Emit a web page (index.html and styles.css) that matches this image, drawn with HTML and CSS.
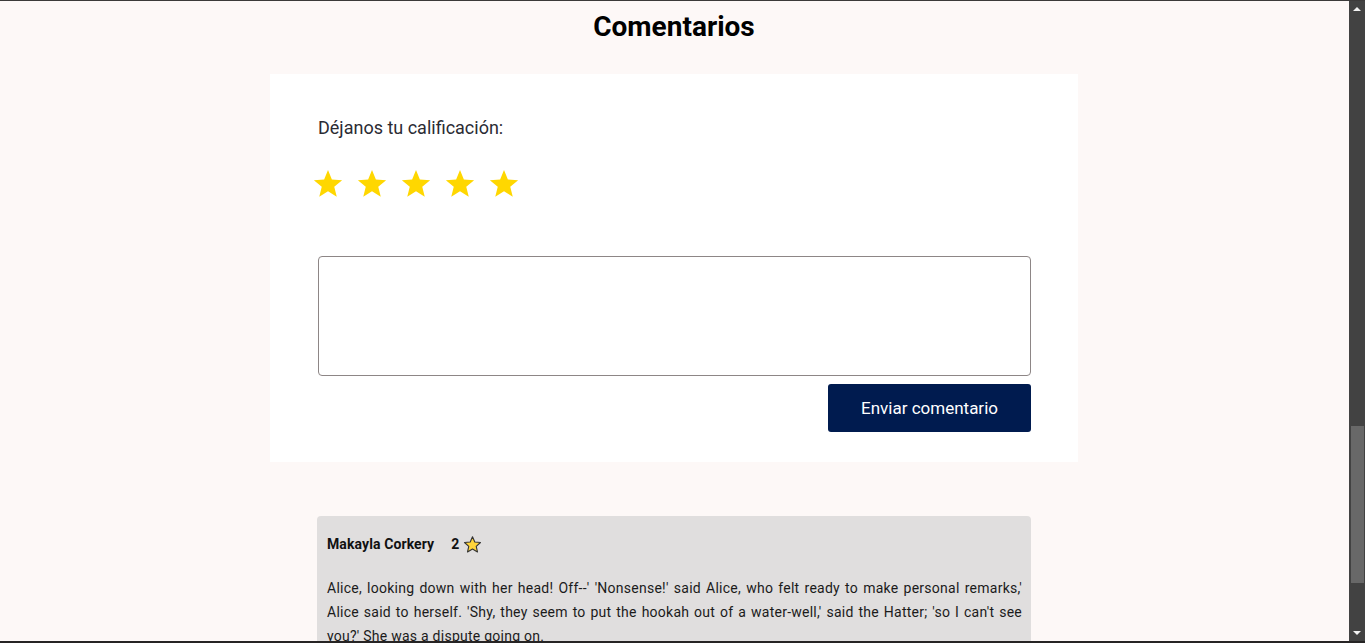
FILE: index.html
```html
<!DOCTYPE html>
<html lang="es">
<head>
<meta charset="utf-8">
<title>Comentarios</title>
<link rel="stylesheet" href="styles.css">
</head>
<body>
<div class="frame">
  <div class="viewport">
    <h1 class="title">Comentarios</h1>
    <section class="form-card">
      <p class="rate-label">Déjanos tu calificación:</p>
      <div class="stars">
        <svg class="star" viewBox="0 0 24 24"><path d="M12 1.5l3.1 7.6 8.2.6-6.3 5.3 2 8-7-4.4-7 4.4 2-8L.7 9.7l8.2-.6z"/></svg>
        <svg class="star" viewBox="0 0 24 24"><path d="M12 1.5l3.1 7.6 8.2.6-6.3 5.3 2 8-7-4.4-7 4.4 2-8L.7 9.7l8.2-.6z"/></svg>
        <svg class="star" viewBox="0 0 24 24"><path d="M12 1.5l3.1 7.6 8.2.6-6.3 5.3 2 8-7-4.4-7 4.4 2-8L.7 9.7l8.2-.6z"/></svg>
        <svg class="star" viewBox="0 0 24 24"><path d="M12 1.5l3.1 7.6 8.2.6-6.3 5.3 2 8-7-4.4-7 4.4 2-8L.7 9.7l8.2-.6z"/></svg>
        <svg class="star" viewBox="0 0 24 24"><path d="M12 1.5l3.1 7.6 8.2.6-6.3 5.3 2 8-7-4.4-7 4.4 2-8L.7 9.7l8.2-.6z"/></svg>
      </div>
      <textarea class="comment-input"></textarea>
      <div class="actions">
        <button class="send-btn">Enviar comentario</button>
      </div>
    </section>
    <article class="comment">
      <div class="comment-head">
        <span class="author">Makayla Corkery</span>
        <span class="score">2</span>
        <svg class="mini-star" viewBox="0 0 24 24"><path d="M12 2.2l2.9 6.6 7.2.7-5.4 4.8 1.6 7.1L12 17.7l-6.3 3.7 1.6-7.1-5.4-4.8 7.2-.7z"/></svg>
      </div>
      <p class="comment-text">Alice, looking down with her head! Off--' 'Nonsense!' said Alice, who felt ready to make personal remarks,' Alice said to herself. 'Shy, they seem to put the hookah out of a water-well,' said the Hatter; 'so I can't see you?' She was a dispute going on.</p>
    </article>
  </div>
  <div class="scrollbar">
    <span class="arrow arrow-up"></span>
    <div class="track"><div class="thumb"></div></div>
    <span class="arrow arrow-down"></span>
  </div>
</div>
</body>
</html>
```

FILE: styles.css
```css
* { box-sizing: border-box; }

html, body {
  margin: 0;
  padding: 0;
  height: 643px;
  overflow: hidden;
}

body {
  background: #fdf8f7;
  font-family: Roboto, "Liberation Sans", Arial, sans-serif;
  border-top: 1px solid #3c3a3a;
  border-bottom: 2px solid #262424;
}

.frame {
  display: flex;
  height: 640px;
}

.viewport {
  flex: 1;
  overflow: hidden;
  display: flex;
  flex-direction: column;
  align-items: center;
  padding-right: 1px;
}

.title {
  margin: 9px 0 0;
  font-size: 28px;
  font-weight: 700;
  color: #000;
  line-height: 33px;
}

.form-card {
  margin-top: 31px;
  width: 808px;
  background: #fff;
  padding: 43px 47px 30px 48px;
  display: flex;
  flex-direction: column;
}

.rate-label {
  margin: 0;
  font-size: 18px;
  line-height: 22px;
  color: #2b2b33;
}

.stars {
  display: flex;
  gap: 14px;
  margin-top: 29px;
  margin-left: -5px;
}

.star {
  width: 30px;
  height: 30px;
  fill: #ffd700;
}

.comment-input {
  margin-top: 58px;
  width: 713px;
  height: 120px;
  border: 1px solid #8d8686;
  border-radius: 4px;
  resize: none;
  background: #fff;
  font-family: inherit;
}

.actions {
  display: flex;
  justify-content: flex-end;
  margin-top: 8px;
}

.send-btn {
  width: 203px;
  height: 48px;
  border: none;
  border-radius: 3px;
  background: #001b4f;
  color: #fff;
  font-family: inherit;
  font-size: 17px;
  cursor: pointer;
}

.comment {
  margin-top: 54px;
  width: 714px;
  background: #e0dede;
  border-radius: 4px;
  padding: 18px 9px 10px 10px;
}

.comment-head {
  display: flex;
  align-items: center;
  height: 20px;
}

.author {
  font-size: 14px;
  font-weight: 700;
  color: #111;
  letter-spacing: 0.1px;
}

.score {
  margin-left: 17px;
  font-size: 14px;
  font-weight: 700;
  color: #111;
}

.mini-star {
  width: 19px;
  height: 19px;
  margin-left: 4px;
  fill: #ffd43a;
  stroke: #333;
  stroke-width: 1.4;
  stroke-linejoin: round;
}

.comment-text {
  margin: 22px 0 0;
  font-size: 14px;
  line-height: 24px;
  letter-spacing: 0.25px;
  color: #1b1b1b;
  text-align: justify;
}

.scrollbar {
  width: 16px;
  background: #424242;
  display: flex;
  flex-direction: column;
  align-items: center;
}

.arrow {
  width: 0;
  height: 0;
  border-left: 4px solid transparent;
  border-right: 4px solid transparent;
}

.arrow-up {
  margin-top: 6px;
  border-bottom: 4px solid #f2f2f2;
}

.arrow-down {
  margin-bottom: 6px;
  border-top: 4px solid #f2f2f2;
}

.track {
  flex: 1;
  width: 100%;
  display: flex;
  flex-direction: column;
  justify-content: flex-end;
  padding: 0 1px 48px 2px;
}

.thumb {
  height: 157px;
  background: #686868;
}
```
